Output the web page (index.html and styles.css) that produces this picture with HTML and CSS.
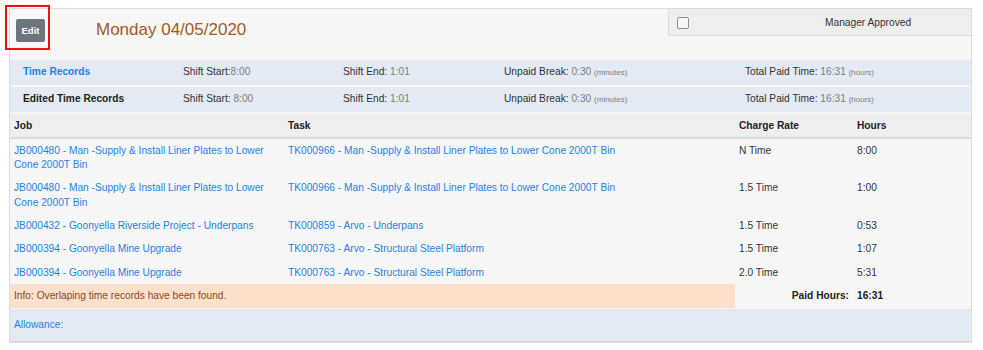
FILE: index.html
```html
<!DOCTYPE html>
<html>
<head>
<meta charset="utf-8">
<link rel="stylesheet" href="styles.css">
</head>
<body>
<div class="panel">
  <div class="top">
    <button class="btn-edit">Edit</button>
    <h1 class="title">Monday 04/05/2020</h1>
    <div class="approval">
      <span class="checkbox"></span>
      <span class="approval-label">Manager Approved</span>
    </div>
  </div>
  <div class="records">
    <div class="rec-row">
      <a class="rec-title link">Time Records</a>
      <span>Shift Start:<span class="val">8:00</span></span>
      <span>Shift End: <span class="val">1:01</span></span>
      <span>Unpaid Break: <span class="val">0:30</span> <small class="unit">(minutes)</small></span>
      <span>Total Paid Time: <span class="val">16:31</span> <small class="unit">(hours)</small></span>
    </div>
    <div class="rec-row">
      <span class="rec-title">Edited Time Records</span>
      <span>Shift Start: <span class="val">8:00</span></span>
      <span>Shift End: <span class="val">1:01</span></span>
      <span>Unpaid Break: <span class="val">0:30</span> <small class="unit">(minutes)</small></span>
      <span>Total Paid Time: <span class="val">16:31</span> <small class="unit">(hours)</small></span>
    </div>
  </div>
  <table class="jobs">
    <colgroup>
      <col class="c-job"><col class="c-task"><col class="c-rate"><col class="c-hours">
    </colgroup>
    <thead>
      <tr><th>Job</th><th>Task</th><th>Charge Rate</th><th>Hours</th></tr>
    </thead>
    <tbody>
      <tr>
        <td><a class="link">JB000480 - Man -Supply &amp; Install Liner Plates to Lower Cone 2000T Bin</a></td>
        <td><a class="link">TK000966 - Man -Supply &amp; Install Liner Plates to Lower Cone 2000T Bin</a></td>
        <td>N Time</td><td>8:00</td>
      </tr>
      <tr>
        <td><a class="link">JB000480 - Man -Supply &amp; Install Liner Plates to Lower Cone 2000T Bin</a></td>
        <td><a class="link">TK000966 - Man -Supply &amp; Install Liner Plates to Lower Cone 2000T Bin</a></td>
        <td>1.5 Time</td><td>1:00</td>
      </tr>
      <tr>
        <td><a class="link">JB000432 - Goonyella Riverside Project - Underpans</a></td>
        <td><a class="link">TK000859 - Arvo - Underpans</a></td>
        <td>1.5 Time</td><td>0:53</td>
      </tr>
      <tr>
        <td><a class="link">JB000394 - Goonyella Mine Upgrade</a></td>
        <td><a class="link">TK000763 - Arvo - Structural Steel Platform</a></td>
        <td>1.5 Time</td><td>1:07</td>
      </tr>
      <tr>
        <td><a class="link">JB000394 - Goonyella Mine Upgrade</a></td>
        <td><a class="link">TK000763 - Arvo - Structural Steel Platform</a></td>
        <td>2.0 Time</td><td>5:31</td>
      </tr>
      <tr class="info-row">
        <td colspan="2" class="info">Info: Overlaping time records have been found.</td>
        <td class="paid-label">Paid Hours:</td>
        <td class="paid-value">16:31</td>
      </tr>
    </tbody>
  </table>
  <div class="allowance"><a class="link">Allowance:</a></div>
</div>
<div class="highlight"></div>
</body>
</html>
```

FILE: styles.css
```css
* { box-sizing: border-box; }

body {
  margin: 0;
  background: #ffffff;
  font-family: "Liberation Sans", Arial, sans-serif;
  font-size: 10.2px;
  line-height: 14.57px;
  color: #333333;
}

.panel {
  margin: 8px 0 0 9px;
  width: 963px;
  background: #f7f7f7;
  border: 1px solid #dcdcdc;
  border-bottom-width: 2px;
}

.top {
  display: flex;
  align-items: flex-start;
  height: 50px;
}

.btn-edit {
  margin: 10px 0 0 6px;
  width: 29px;
  height: 23px;
  padding: 0;
  border: none;
  border-radius: 2px;
  background: #6c757d;
  color: #ffffff;
  font-family: "Liberation Sans", Arial, sans-serif;
  font-weight: bold;
  font-size: 9.5px;
}

.title {
  margin: 10px 0 0 51px;
  font-weight: normal;
  font-size: 17px;
  line-height: 22px;
  color: #a2591f;
}

.approval {
  margin-left: auto;
  width: 303px;
  height: 27px;
  background: #eeeeee;
  border-left: 1px solid #dddddd;
  border-bottom: 1px solid #dddddd;
  display: flex;
  align-items: center;
  padding: 2px 0 0 8px;
}

.checkbox {
  width: 12px;
  height: 12px;
  border: 1px solid #8f8f8f;
  border-radius: 2px;
  background: #f4f4f4;
}

.approval-label {
  margin-left: 136px;
  color: #333333;
}

.records {
  margin-top: 1px;
}

.rec-row {
  display: grid;
  grid-template-columns: 160px 160px 161px 241px 1fr;
  padding-left: 13px;
  height: 25px;
  align-items: center;
  background: #e3eaf3;
  margin-bottom: 2px;
}

.rec-title {
  font-weight: bold;
  color: #222222;
}

.rec-title.link {
  color: #1e7fe6;
}

.val {
  color: #808080;
}

.unit {
  font-size: 8px;
  color: #808080;
}

.link {
  color: #1e7fe6;
  text-decoration: none;
}

.jobs {
  width: 961px;
  border-collapse: collapse;
  table-layout: fixed;
}

.c-job { width: 274px; }
.c-task { width: 451px; }
.c-rate { width: 118px; }
.c-hours { width: 118px; }

.jobs th {
  text-align: left;
  font-weight: bold;
  background: #eeeeee;
  border-bottom: 2px solid #dddddd;
  padding: 5px 4px 3px;
  height: 24px;
  color: #222222;
}

.jobs td {
  padding: 4.5px 4px 4.2px;
  vertical-align: top;
  color: #333333;
}

.jobs td.info {
  background: #fde0cc;
  color: #8a4a1c;
}

.jobs td.paid-label {
  text-align: right;
  font-weight: bold;
  color: #222222;
}

.jobs td.paid-value {
  font-weight: bold;
  color: #222222;
}

.allowance {
  margin-top: 1px;
  background: #e3eaf3;
  height: 32px;
  padding: 9px 4px;
  line-height: 14.57px;
}

.highlight {
  position: absolute;
  left: 5px;
  top: 5px;
  width: 45px;
  height: 45px;
  border: 2px solid #e8141b;
}
```
